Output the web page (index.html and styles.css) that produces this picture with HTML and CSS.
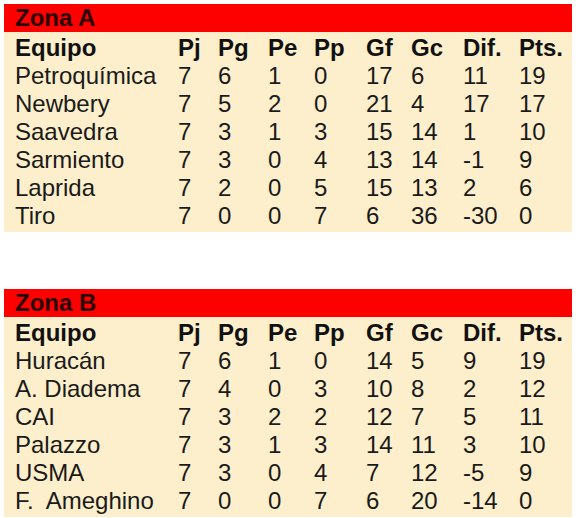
FILE: index.html
```html
<!DOCTYPE html>
<html lang="es">
<head>
<meta charset="utf-8">
<link rel="stylesheet" href="styles.css">
</head>
<body>
<div class="page">
  <section class="zone">
    <div class="zone-title">Zona A</div>
    <div class="grid">
      <div class="row head"><span>Equipo</span><span>Pj</span><span>Pg</span><span>Pe</span><span>Pp</span><span>Gf</span><span>Gc</span><span>Dif.</span><span>Pts.</span></div>
      <div class="row"><span>Petroquímica</span><span>7</span><span>6</span><span>1</span><span>0</span><span>17</span><span>6</span><span>11</span><span>19</span></div>
      <div class="row"><span>Newbery</span><span>7</span><span>5</span><span>2</span><span>0</span><span>21</span><span>4</span><span>17</span><span>17</span></div>
      <div class="row"><span>Saavedra</span><span>7</span><span>3</span><span>1</span><span>3</span><span>15</span><span>14</span><span>1</span><span>10</span></div>
      <div class="row"><span>Sarmiento</span><span>7</span><span>3</span><span>0</span><span>4</span><span>13</span><span>14</span><span>-1</span><span>9</span></div>
      <div class="row"><span>Laprida</span><span>7</span><span>2</span><span>0</span><span>5</span><span>15</span><span>13</span><span>2</span><span>6</span></div>
      <div class="row"><span>Tiro</span><span>7</span><span>0</span><span>0</span><span>7</span><span>6</span><span>36</span><span>-30</span><span>0</span></div>
    </div>
  </section>
  <section class="zone">
    <div class="zone-title">Zona B</div>
    <div class="grid">
      <div class="row head"><span>Equipo</span><span>Pj</span><span>Pg</span><span>Pe</span><span>Pp</span><span>Gf</span><span>Gc</span><span>Dif.</span><span>Pts.</span></div>
      <div class="row"><span>Huracán</span><span>7</span><span>6</span><span>1</span><span>0</span><span>14</span><span>5</span><span>9</span><span>19</span></div>
      <div class="row"><span>A. Diadema</span><span>7</span><span>4</span><span>0</span><span>3</span><span>10</span><span>8</span><span>2</span><span>12</span></div>
      <div class="row"><span>CAI</span><span>7</span><span>3</span><span>2</span><span>2</span><span>12</span><span>7</span><span>5</span><span>11</span></div>
      <div class="row"><span>Palazzo</span><span>7</span><span>3</span><span>1</span><span>3</span><span>14</span><span>11</span><span>3</span><span>10</span></div>
      <div class="row"><span>USMA</span><span>7</span><span>3</span><span>0</span><span>4</span><span>7</span><span>12</span><span>-5</span><span>9</span></div>
      <div class="row"><span>F.&nbsp; Ameghino</span><span>7</span><span>0</span><span>0</span><span>7</span><span>6</span><span>20</span><span>-14</span><span>0</span></div>
    </div>
  </section>
</div>
</body>
</html>
```

FILE: styles.css
```css
html, body {
  margin: 0;
  padding: 0;
  background: #ffffff;
}
.page {
  padding: 4px 4px 0 4px;
  display: flex;
  flex-direction: column;
  gap: 57px;
  font-family: "Liberation Sans", Arial, sans-serif;
  font-size: 24px;
  color: #1a1a1a;
}
.zone {
  width: 568px;
  background: #fdefcc;
  padding-bottom: 2px;
}
.zone-title {
  background: #fe0000;
  color: #2a0000;
  font-weight: bold;
  height: 28px;
  line-height: 28px;
  padding-left: 11px;
}
.grid {
  display: flex;
  flex-direction: column;
  padding-top: 2px;
}
.row {
  display: grid;
  grid-template-columns: 174px 40px 50px 46px 52px 45px 52px 56px 53px;
  height: 28px;
  line-height: 28px;
  white-space: nowrap;
}
.row span:first-child {
  padding-left: 11px;
}
.row.head {
  font-weight: bold;
  color: #111;
}
```
